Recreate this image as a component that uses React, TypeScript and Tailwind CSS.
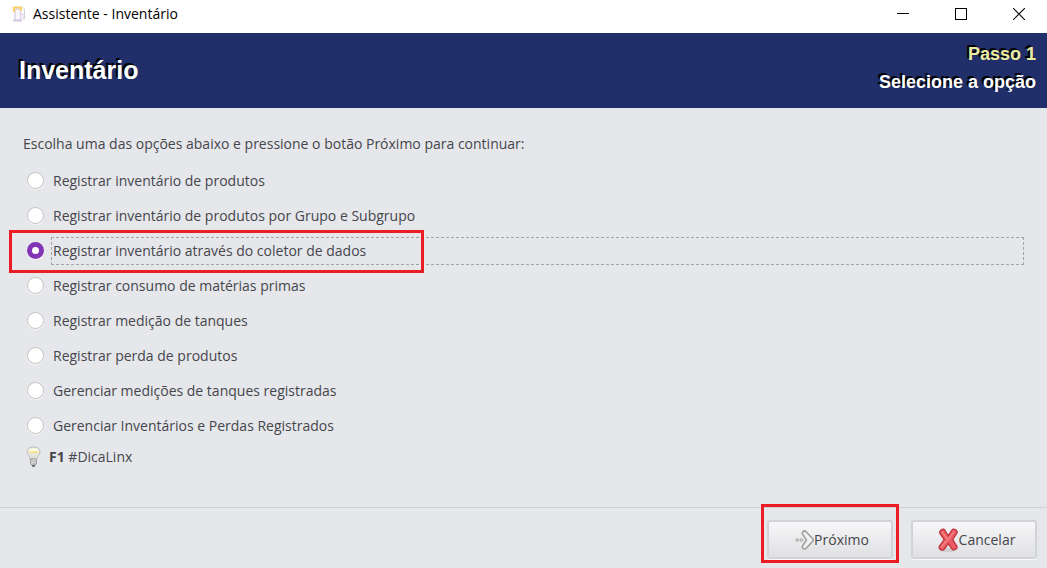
import { useState } from "react";

const options = [
  "Registrar inventário de produtos",
  "Registrar inventário de produtos por Grupo e Subgrupo",
  "Registrar inventário através do coletor de dados",
  "Registrar consumo de matérias primas",
  "Registrar medição de tanques",
  "Registrar perda de produtos",
  "Gerenciar medições de tanques registradas",
  "Gerenciar Inventários e Perdas Registrados",
];

const highlighted = 2;

function PumpIcon() {
  return (
    <svg width="14" height="18" viewBox="0 0 14 18" fill="none" aria-hidden="true">
      <path d="M3 4h5.500v11H3z" fill="#fbf9fd" stroke="#ddd3ea" strokeWidth="1.500" />
      <path d="M2 7V2.500h7V6" stroke="#f9d06a" strokeWidth="2.200" />
      <path d="M1 15.500h9" stroke="#d3c8e3" strokeWidth="2" />
      <path d="M9 9h2v5h1.500V4L10.500 2.500" stroke="#d8d0e0" />
    </svg>
  );
}

function BulbIcon() {
  return (
    <svg width="15" height="22" viewBox="0 0 15 22" fill="none" aria-hidden="true">
      <path
        d="M7.500 1C3.500 1 1 2.800 1 5.500c0 3 2.800 4.500 3.200 7.500h6.600c.4-3 3.200-4.500 3.200-7.500C14 2.800 11.500 1 7.500 1z"
        fill="#e9e9e4"
        stroke="#bcbcb8"
      />
      <path d="M2.500 6c0-2.500 2-3.800 5-3.800s5 1.300 5 3.800z" fill="#fdfbdc" />
      <path d="M2.800 6.200h9.400" stroke="#f3e08a" strokeWidth="1.800" />
      <path d="M5.500 8.500l1 4M9.500 8.500l-1 4" stroke="#d2d2cd" />
      <path d="M4.700 13h5.600v4.800L9 19.500H6l-1.300-1.700z" fill="#b4b5b5" stroke="#929393" />
      <path d="M5 14.500l5-.6M5 17l5-.6" stroke="#ececec" />
      <path d="M6 20h3" stroke="#5c5c5c" strokeWidth="1.500" />
    </svg>
  );
}

function NextIcon() {
  return (
    <svg width="19" height="20" viewBox="0 0 19 20" fill="none" aria-hidden="true">
      <circle cx="2.300" cy="10" r="1.400" fill="#dadada" stroke="#a8a8a6" />
      <circle cx="6.500" cy="10" r="1.400" fill="#dadada" stroke="#a8a8a6" />
      <path
        d="M8 1.500c1-.9 2.200-.7 3.100.3l6.600 7c.7.800.7 1.600 0 2.400l-6.600 7c-.9 1-2.100 1.200-3.100.3-.9-.9-.8-1.900-.2-2.900L11.500 10 7.800 4.400c-.6-1-.7-2 .2-2.900z"
        fill="#f1f1f1"
        stroke="#9c9c9a"
        strokeWidth="1.500"
      />
    </svg>
  );
}

function CancelIcon() {
  return (
    <svg width="22" height="24" viewBox="0 0 22 24" fill="none" aria-hidden="true">
      <ellipse cx="11" cy="22" rx="8" ry="2" fill="#cfcfd1" />
      <path
        d="M3.800 2.200C5.200 1 7 .8 7.900 2.400l3.300 5.400 3.600-5.500c1-1.500 2.600-1.300 3.900-.5 1.500.9 1.900 2.300 1 3.700l-4 6.200 3.800 5.900c.9 1.500.5 2.800-.8 3.700-1.400.9-3 .9-4-.6l-3.400-5-3.900 5.300c-1 1.400-2.600 1.300-4 .4-1.400-1-1.600-2.400-.6-3.800l4.400-6L3.100 5.700c-.8-1.400-.5-2.600.7-3.500z"
        fill="#ec5c62"
        stroke="#be343c"
        strokeWidth="1.300"
      />
      <path d="M5.300 3.800 11 12l5.700-8M4.500 19l4.500-5.800" stroke="#f38387" strokeWidth="1.500" strokeLinecap="round" />
    </svg>
  );
}

const buttonClass =
  "flex h-[39px] w-[126px] items-center justify-center rounded-[3px] border-2 border-[#d2d3d8] bg-linear-to-b from-[#f7f7f8] to-[#dfe0e3] pt-px pl-1 shadow-[0_1px_0_#f8f8fa]";
const captionClass = "flex w-11 items-center justify-center";

export default function App() {
  const [selected, setSelected] = useState(highlighted);

  return (
    <div className="flex min-h-screen flex-col bg-[#e6e7eb] font-['Open_Sans','Noto_Sans',sans-serif] text-sm text-[#45464b]">
      <div className="flex h-[33px] items-start justify-between bg-white text-black">
        <div className="flex h-7 items-center gap-[7px] pl-3">
          <PumpIcon />
          <span>Assistente - Inventário</span>
        </div>
        <div className="flex h-7 items-center gap-[14px] pr-[6px]">
          <button type="button" aria-label="Minimizar" className={captionClass}>
            <svg width="12" height="12" viewBox="0 0 12 12" shapeRendering="crispEdges">
              <path d="M0 5.500h12" stroke="#000" />
            </svg>
          </button>
          <button type="button" aria-label="Maximizar" className={captionClass}>
            <svg width="12" height="12" viewBox="0 0 12 12" fill="none" shapeRendering="crispEdges">
              <path d="M.5.5h11v11H.5z" stroke="#000" />
            </svg>
          </button>
          <button type="button" aria-label="Fechar" className={captionClass}>
            <svg width="12" height="12" viewBox="0 0 12 12">
              <path d="M0 0l12 12M12 0 0 12" stroke="#000" strokeWidth="1.100" />
            </svg>
          </button>
        </div>
      </div>

      <header className="flex h-[75px] items-center justify-between bg-[#202f69] pr-[11px] pl-[19px] font-['Liberation_Sans',sans-serif] font-bold text-white [text-shadow:-2px_-2px_0_#000]">
        <h1 className="text-[25px]">Inventário</h1>
        <div className="pb-[5px] text-right text-lg leading-7">
          <p className="text-[#ececa0]">Passo 1</p>
          <p>Selecione a opção</p>
        </div>
      </header>

      <main className="grow px-[23px] pt-5 pb-9">
        <fieldset>
          <legend className="flex h-[35px] items-center pb-[3px]">
            Escolha uma das opções abaixo e pressione o botão Próximo para continuar:
          </legend>
          {options.map((label, i) => (
            <div key={label} className="relative flex h-[35px] items-center gap-[7px] pl-1">
              <input
                type="radio"
                id={`opcao-${i}`}
                name="opcao"
                checked={selected === i}
                onChange={() => setSelected(i)}
                className="size-[17px] shrink-0 appearance-none rounded-full border border-[#c0c1be] bg-white shadow-[0_1px_1px_#f8f8f8] outline-none checked:border-[5px] checked:border-[#8134b4]"
              />
              <label
                htmlFor={`opcao-${i}`}
                className={
                  selected === i
                    ? "flex h-7 grow items-center border border-dashed border-[#a3a4a8] px-px"
                    : "flex h-7 grow items-center border border-transparent px-px"
                }
              >
                {label}
              </label>
              {i === highlighted && (
                <div className="pointer-events-none absolute -top-[3px] -bottom-[5px] -left-[14px] w-[415px] border-3 border-[#ed1c24]" />
              )}
            </div>
          ))}
        </fieldset>
        <p className="flex h-7 items-center gap-2 pl-[3px]">
          <BulbIcon />
          <span>
            <b>F1</b> #DicaLinx
          </span>
        </p>
      </main>

      <footer className="flex justify-end gap-[18px] border-t border-[#cfd0d5] pt-3 pr-[10px] pb-[9px]">
        <div className="relative">
          <button type="button" className={buttonClass}>
            <NextIcon />
            Próximo
          </button>
          <div className="pointer-events-none absolute -top-4 -right-[6px] -bottom-1 -left-[6px] border-3 border-[#ed1c24]" />
        </div>
        <button type="button" className={buttonClass}>
          <CancelIcon />
          Cancelar
        </button>
      </footer>
    </div>
  );
}
